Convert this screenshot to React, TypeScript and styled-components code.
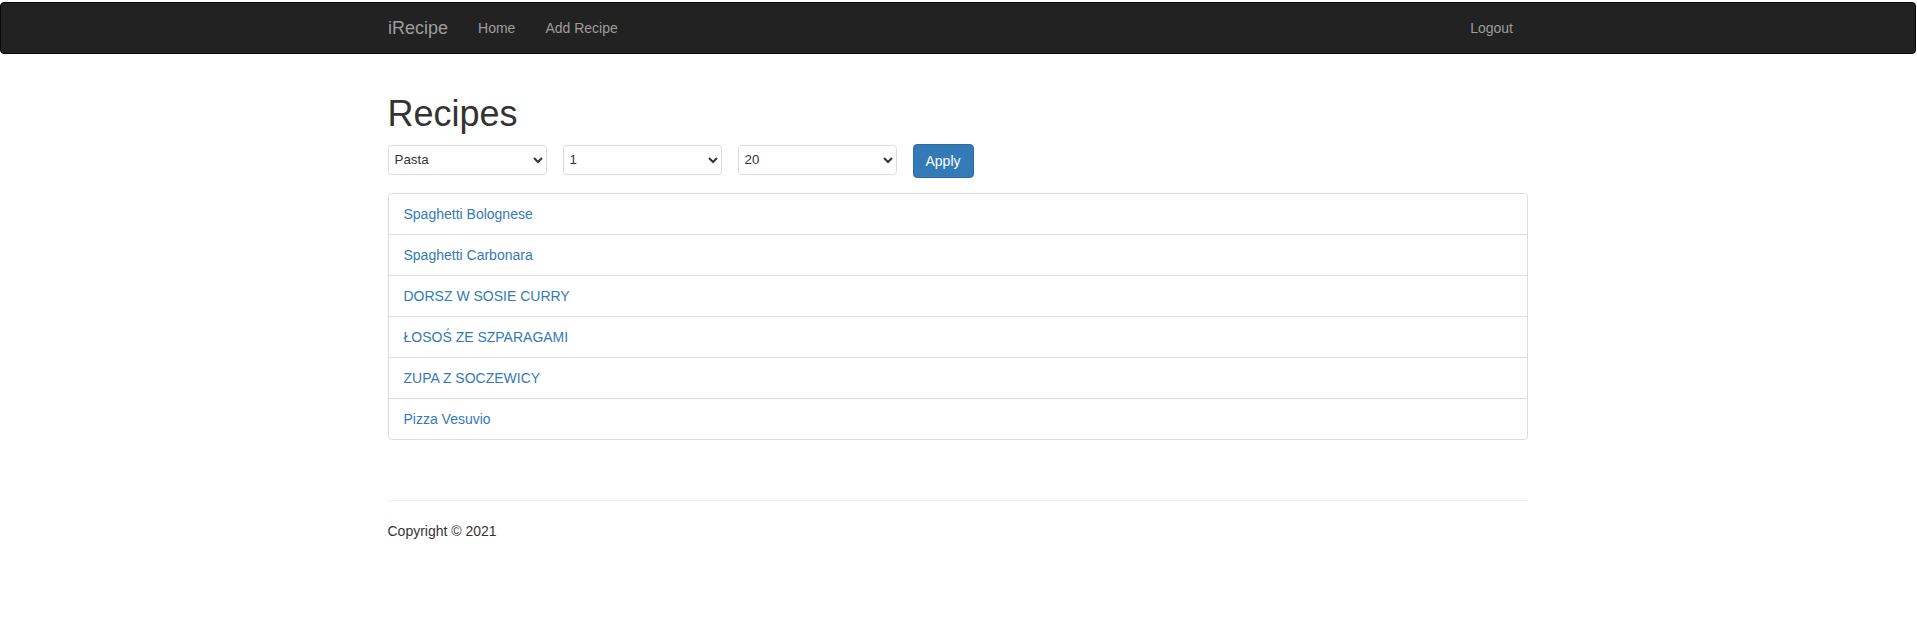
import React from "react";
import styled, { createGlobalStyle } from "styled-components";

const GlobalStyle = createGlobalStyle`
  html, body {
    margin: 0;
    padding: 0;
    background: #fff;
  }
  body {
    padding-right: 2px;
    font-family: "Liberation Sans", Arial, Helvetica, sans-serif;
    font-size: 14px;
    line-height: 1.42857143;
    color: #333;
  }
  * { box-sizing: border-box; }
`;

const Navbar = styled.nav`
  margin: 2px -1px 20px 0;
  min-height: 50px;
  background: #222;
  border: 1px solid #080808;
  border-radius: 4px;
`;

const Container = styled.div`
  width: 1170px;
  margin: 0 auto;
  padding: 0 15px;
`;

const Main = styled(Container)`
  display: flow-root;
`;

const NavInner = styled(Container)`
  display: flex;
  align-items: stretch;
  padding: 0;
`;

const Brand = styled.a`
  display: block;
  height: 50px;
  padding: 15px;
  font-size: 18px;
  line-height: 20px;
  color: #9d9d9d;
  text-decoration: none;
`;

const NavList = styled.ul<{ $right?: boolean }>`
  display: flex;
  list-style: none;
  margin: 0;
  padding: 0;
  margin-left: ${(p) => (p.$right ? "auto" : "0")};
  margin-right: ${(p) => (p.$right ? "15px" : "0")};
`;

const NavLink = styled.a`
  display: block;
  padding: 15px;
  line-height: 20px;
  color: #9d9d9d;
  text-decoration: none;
`;

const Title = styled.h1`
  font-size: 36px;
  font-weight: 500;
  line-height: 1.1;
  margin: 20px 0 10px;
  font-family: "Liberation Sans", Arial, sans-serif;
`;

const FilterRow = styled.form`
  display: flex;
  align-items: flex-start;
  gap: 16px;
  margin: 0 0 15px;
`;

const Select = styled.select`
  width: 159px;
  height: 30px;
  margin-top: 1px;
  padding: 0 2px;
  font-family: "Liberation Sans", Arial, sans-serif;
  font-size: 13.333px;
  color: #333;
  background: #fff;
  border: 1px solid #dcdcdc;
  border-radius: 4px;
`;

const Button = styled.button`
  height: 34px;
  padding: 6px 12px;
  font-family: "Liberation Sans", Arial, sans-serif;
  font-size: 14px;
  line-height: 20px;
  color: #fff;
  background: #337ab7;
  border: 1px solid #2e6da4;
  border-radius: 4px;
  cursor: pointer;
`;

const ListGroup = styled.div`
  display: flex;
  flex-direction: column;
  margin: 0 0 20px;
`;

const ListItem = styled.a`
  display: block;
  padding: 10px 15px;
  line-height: 20px;
  color: #337ab7;
  text-decoration: none;
  background: #fff;
  border: 1px solid #ddd;
  margin-bottom: -1px;
  &:first-child {
    border-top-left-radius: 4px;
    border-top-right-radius: 4px;
  }
  &:last-child {
    margin-bottom: 0;
    border-bottom-left-radius: 4px;
    border-bottom-right-radius: 4px;
  }
`;

const Footer = styled.footer`
  padding-top: 20px;
`;

const Rule = styled.hr`
  margin: 20px 0;
  border: 0;
  border-top: 1px solid #eee;
`;

const Copy = styled.p`
  margin: 0 0 10px;
`;

const recipes = [
  "Spaghetti Bolognese",
  "Spaghetti Carbonara",
  "DORSZ W SOSIE CURRY",
  "ŁOSOŚ ZE SZPARAGAMI",
  "ZUPA Z SOCZEWICY",
  "Pizza Vesuvio",
];

export default function App() {
  return (
    <>
      <GlobalStyle />
      <Navbar>
        <NavInner>
          <Brand href="#">iRecipe</Brand>
          <NavList>
            <li>
              <NavLink href="#">Home</NavLink>
            </li>
            <li>
              <NavLink href="#">Add Recipe</NavLink>
            </li>
          </NavList>
          <NavList $right>
            <li>
              <NavLink href="#">Logout</NavLink>
            </li>
          </NavList>
        </NavInner>
      </Navbar>
      <Main>
        <Title>Recipes</Title>
        <FilterRow onSubmit={(e) => e.preventDefault()}>
          <Select defaultValue="Pasta">
            <option>Pasta</option>
            <option>Fish</option>
            <option>Soup</option>
            <option>Pizza</option>
          </Select>
          <Select defaultValue="1">
            <option>1</option>
            <option>2</option>
            <option>3</option>
          </Select>
          <Select defaultValue="20">
            <option>10</option>
            <option>20</option>
            <option>50</option>
          </Select>
          <Button type="submit">Apply</Button>
        </FilterRow>
        <ListGroup>
          {recipes.map((r) => (
            <ListItem key={r} href="#">
              {r}
            </ListItem>
          ))}
        </ListGroup>
        <Footer>
          <Rule />
          <Copy>Copyright © 2021</Copy>
        </Footer>
      </Main>
    </>
  );
}
